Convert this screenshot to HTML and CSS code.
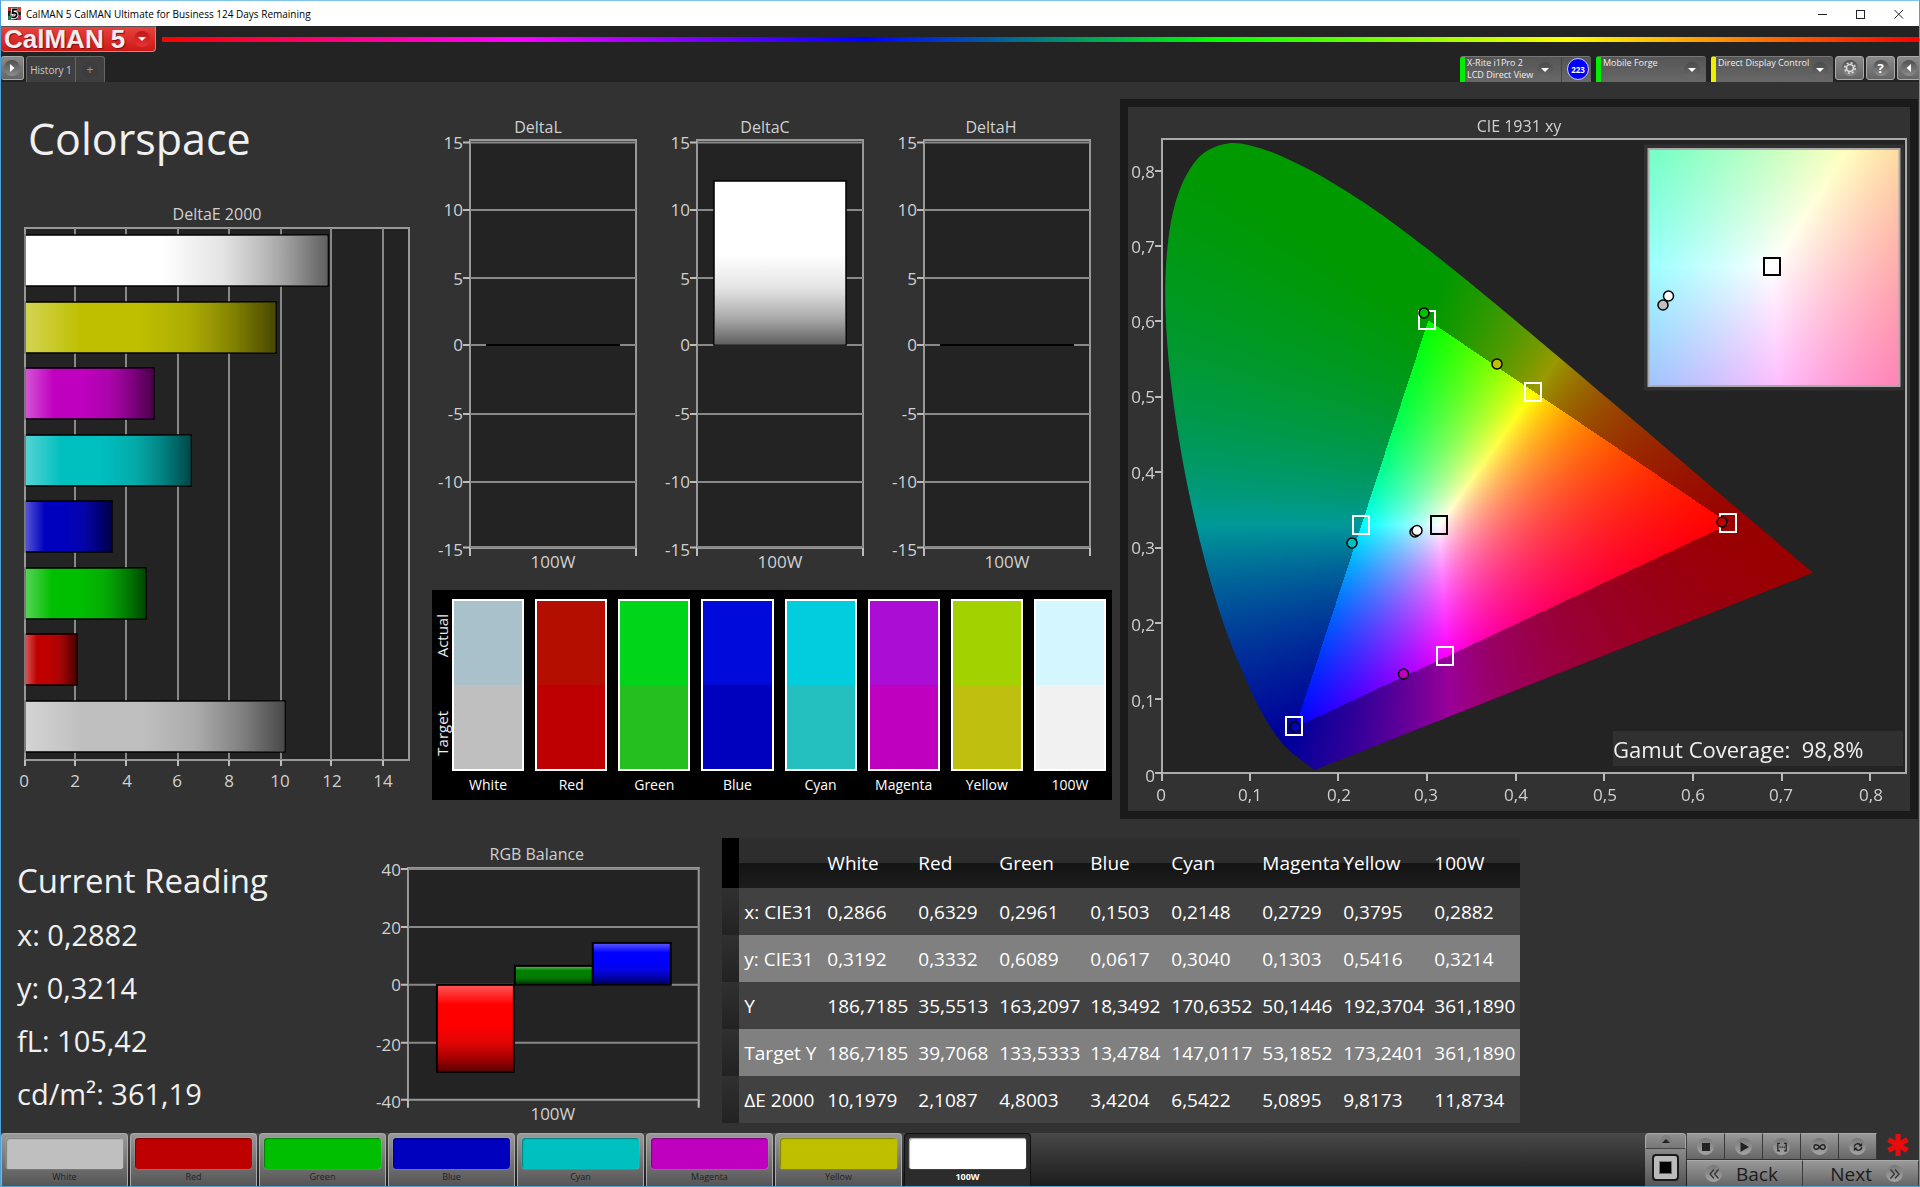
FILE: index.html
```html
<!DOCTYPE html>
<html lang="en">
<head>
<meta charset="utf-8">
<title>CalMAN 5 CalMAN Ultimate for Business</title>
<link rel="stylesheet" href="styles.css">
</head>
<body>
<div class="window">
  <header class="titlebar">
    <svg class="app-icon" viewBox="0 0 13 13" aria-hidden="true">
      <rect width="13" height="13" fill="#222"/>
      <rect width="4" height="4" fill="#b33a2e"/><rect x="9" width="4" height="5" fill="#c43"/>
      <rect y="9" width="4" height="4" fill="#2c7a4a"/><rect x="9" y="8" width="4" height="5" fill="#a3365a"/>
      <path d="M9.5 2.5H5L4.500 6.200C8 5.200 9 6.500 8.500 8.500C8 10.500 5.500 10.800 3.500 10" fill="none" stroke="#fff" stroke-width="3.600"/>
      <path d="M9.500 2.500H5L4.500 6.200C8 5.200 9 6.500 8.500 8.500C8 10.500 5.500 10.800 3.500 10" fill="none" stroke="#000" stroke-width="1.800"/>
    </svg>
    <span class="titlebar-text">CalMAN 5 CalMAN Ultimate for Business 124 Days Remaining</span>
    <div class="window-controls">
      <button aria-label="Minimize"><svg viewBox="0 0 10 10"><path d="M0 5.500H9" stroke="#222"/></svg></button>
      <button aria-label="Maximize"><svg viewBox="0 0 10 10"><rect x=".5" y="1.500" width="8" height="8" fill="none" stroke="#222"/></svg></button>
      <button aria-label="Close"><svg viewBox="0 0 10 10"><path d="M.5 1L9 9.500M9 1L.5 9.500" stroke="#222"/></svg></button>
    </div>
  </header>

  <div class="brandbar">
    <button class="brand"><span class="brand-name">CalMAN</span><span class="brand-five">5</span><span class="knob knob-red"><svg viewBox="0 0 8 4"><path d="M0 0H8L4 4Z" fill="#fff"/></svg></span></button>
    <div class="rainbow"></div>
  </div>

  <nav class="tabbar">
    <button class="square-btn square-left" aria-label="Expand"><span class="knob"><svg viewBox="0 0 8 10"><path d="M1.500 0L7 5L1.500 10Z" fill="#fff"/></svg></span></button>
    <div class="tabs">
      <button class="tab">History 1</button>
      <button class="tab tab-add" aria-label="Add tab"><span class="knob knob-dark">+</span></button>
    </div>
    <div class="devices">
      <div class="device device-meter">
        <button class="device-btn go"><span class="device-text">X-Rite i1Pro 2<br>LCD Direct View</span><span class="knob knob-shade"><svg viewBox="0 0 8 4"><path d="M0 0H8L4 4Z" fill="#fff"/></svg></span></button>
        <button class="meter-count">223</button>
      </div>
      <button class="device device-btn device-source go"><span class="device-text">Mobile Forge</span><span class="knob knob-shade"><svg viewBox="0 0 8 4"><path d="M0 0H8L4 4Z" fill="#fff"/></svg></span></button>
      <button class="device device-btn device-display warn"><span class="device-text">Direct Display Control</span><span class="knob knob-shade"><svg viewBox="0 0 8 4"><path d="M0 0H8L4 4Z" fill="#fff"/></svg></span></button>
    </div>
    <div class="tools">
      <button class="square-btn" aria-label="Settings"><span class="knob"><svg class="gear" viewBox="0 0 12 12"><circle cx="6" cy="6" r="3.500" fill="none" stroke="#ddd" stroke-width="1.600"/><circle cx="6" cy="6" r="5.200" fill="none" stroke="#ddd" stroke-width="1.600" stroke-dasharray="2 2.080"/></svg></span></button>
      <button class="square-btn" aria-label="Help"><span class="knob knob-help">?</span></button>
      <button class="square-btn square-right" aria-label="Collapse"><span class="knob"><svg viewBox="0 0 8 10"><path d="M6.500 0L1 5L6.500 10Z" fill="#fff"/></svg></span></button>
    </div>
  </nav>

  <main>
    <div class="row-top">
      <section class="col-delta-e">
        <h1>Colorspace</h1>
        <svg class="chart" viewBox="1 200 430 600" role="img" aria-label="DeltaE 2000">
          <defs>
            <linearGradient id="shade-x">
              <stop offset="0" stop-color="#fff" stop-opacity=".33"/><stop offset=".22" stop-color="#fff" stop-opacity="0"/>
              <stop offset=".45" stop-color="#222" stop-opacity="0"/><stop offset=".65" stop-color="#222" stop-opacity=".12"/><stop offset=".85" stop-color="#000" stop-opacity=".35"/><stop offset="1" stop-color="#000" stop-opacity=".62"/>
            </linearGradient>
            <linearGradient id="shade-y" x2="0" y2="1">
              <stop offset="0" stop-color="#fff" stop-opacity=".33"/><stop offset=".22" stop-color="#fff" stop-opacity="0"/>
              <stop offset=".45" stop-color="#222" stop-opacity="0"/><stop offset=".65" stop-color="#222" stop-opacity=".12"/><stop offset=".85" stop-color="#000" stop-opacity=".35"/><stop offset="1" stop-color="#000" stop-opacity=".62"/>
            </linearGradient>
          </defs>
          <text class="label mid" x="217" y="220">DeltaE 2000</text>
          <rect class="plot" x="25" y="228" width="384" height="532"/>
          <path class="grid" d="M75 228V760M126 228V760M178 228V760M229 228V760M281 228V760M331 228V760M383 228V760"/>
          <path class="tick" d="M25 760V766M75 760V766M126 760V766M178 760V766M229 760V766M281 760V766M331 760V766M383 760V766"/>
          <g stroke="#000" stroke-width="1.500">
            <rect x="25" y="235" width="303" height="51" fill="#fff"/>
            <rect x="25" y="302" width="251" height="51" fill="#bfbf00"/>
            <rect x="25" y="368" width="129" height="51" fill="#bf00bf"/>
            <rect x="25" y="435" width="166" height="51" fill="#00bfbf"/>
            <rect x="25" y="501" width="87" height="51" fill="#0000bf"/>
            <rect x="25" y="568" width="121" height="51" fill="#00bf00"/>
            <rect x="25" y="634" width="52" height="51" fill="#bf0000"/>
            <rect x="25" y="701" width="260" height="51" fill="#bfbfbf"/>
          </g>
          <g fill="url(#shade-x)">
            <rect x="26" y="236" width="301" height="49"/><rect x="26" y="303" width="249" height="49"/><rect x="26" y="369" width="127" height="49"/><rect x="26" y="436" width="164" height="49"/><rect x="26" y="502" width="85" height="49"/><rect x="26" y="569" width="119" height="49"/><rect x="26" y="635" width="50" height="49"/><rect x="26" y="702" width="258" height="49"/>
          </g>
          <path d="M25 228V760" stroke="#999" stroke-width="1.500"/>
          <g class="tick-label mid">
            <text x="24" y="787">0</text><text x="75" y="787">2</text><text x="127" y="787">4</text><text x="177" y="787">6</text><text x="229" y="787">8</text><text x="280" y="787">10</text><text x="332" y="787">12</text><text x="383" y="787">14</text>
          </g>
        </svg>
      </section>

      <section class="col-delta-lch">
        <svg class="chart" viewBox="431 110 688 470" role="img" aria-label="DeltaL, DeltaC and DeltaH">
          <defs>
            <g id="delta-axis">
              <rect class="plot" x="470" y="140" width="166" height="408"/>
              <path class="grid" d="M470 142.500H636M470 210H636M470 278H636M470 345H636M470 414H636M470 482H636"/>
              <path class="grid" d="M470 547H636"/>
              <path class="tick" d="M463 142.500H470M463 210H470M463 278H470M463 345H470M463 414H470M463 482H470M463 547.500H470M470 548V556M636 548V556"/>
              <g class="tick-label end">
                <text x="463" y="149">15</text><text x="463" y="216">10</text><text x="463" y="285">5</text><text x="463" y="351">0</text><text x="463" y="420">-5</text><text x="463" y="488">-10</text><text x="463" y="556">-15</text>
              </g>
              <text class="tick-label mid" x="553" y="568">100W</text>
            </g>
          </defs>
          <use href="#delta-axis"/><use href="#delta-axis" x="227"/><use href="#delta-axis" x="454"/>
          <g class="label mid"><text x="538" y="133">DeltaL</text><text x="765" y="133">DeltaC</text><text x="991" y="133">DeltaH</text></g>
          <path d="M486 345H620M940 345H1074" stroke="#000" stroke-width="2"/>
          <rect x="714" y="181" width="132" height="164" fill="#fff" stroke="#000" stroke-width="1.500"/>
          <rect x="715" y="182" width="130" height="162" fill="url(#shade-y)"/>
        </svg>
        <div class="swatches">
          <div class="swatch-sides"><span>Actual</span><span>Target</span></div>
          <figure><div class="swatch white"></div><figcaption>White</figcaption></figure>
          <figure><div class="swatch red"></div><figcaption>Red</figcaption></figure>
          <figure><div class="swatch green"></div><figcaption>Green</figcaption></figure>
          <figure><div class="swatch blue"></div><figcaption>Blue</figcaption></figure>
          <figure><div class="swatch cyan"></div><figcaption>Cyan</figcaption></figure>
          <figure><div class="swatch magenta"></div><figcaption>Magenta</figcaption></figure>
          <figure><div class="swatch yellow"></div><figcaption>Yellow</figcaption></figure>
          <figure><div class="swatch w100"></div><figcaption>100W</figcaption></figure>
        </div>
      </section>

      <section class="col-cie">
        <div class="cie">
          <canvas id="cie" width="782" height="704"></canvas>
          <svg class="chart" viewBox="1128 106 782 704" role="img" aria-label="CIE 1931 xy">
            <text class="label mid" x="1519" y="131">CIE 1931 xy</text>
            <rect class="frame" x="1162" y="138" width="744" height="634"/>
            <path class="tick" d="M1155 170H1162M1155 245H1162M1155 320H1162M1155 396H1162M1155 471H1162M1155 547H1162M1155 622H1162M1155 698H1162M1155 772H1162M1162 772V780M1250 772V780M1338 772V780M1427 772V780M1516 772V780M1604 772V780M1693 772V780M1782 772V780M1870 772V780"/>
            <g class="tick-label end">
              <text x="1155" y="177">0,8</text><text x="1155" y="252">0,7</text><text x="1155" y="327">0,6</text><text x="1155" y="402">0,5</text><text x="1155" y="478">0,4</text><text x="1155" y="553">0,3</text><text x="1155" y="630">0,2</text><text x="1155" y="706">0,1</text><text x="1155" y="781">0</text>
            </g>
            <g class="tick-label mid">
              <text x="1161" y="800">0</text><text x="1250" y="800">0,1</text><text x="1339" y="800">0,2</text><text x="1426" y="800">0,3</text><text x="1516" y="800">0,4</text><text x="1605" y="800">0,5</text><text x="1693" y="800">0,6</text><text x="1781" y="800">0,7</text><text x="1871" y="800">0,8</text>
            </g>
            <rect x="1646" y="145.500" width="256" height="242" fill="none" stroke="#303030" stroke-width="4"/>
            <rect class="frame" x="1648.500" y="148" width="251" height="237"/>
            <g fill="none" stroke="#fff" stroke-width="2">
              <rect x="1419" y="310" width="16" height="18"/><rect x="1525" y="382" width="16" height="18"/><rect x="1353" y="515" width="16" height="18"/><rect x="1720" y="513" width="16" height="18"/><rect x="1437" y="646" width="16" height="18"/><rect x="1286" y="716" width="16" height="18"/>
            </g>
            <g fill="none" stroke="#000" stroke-width="2"><rect x="1431" y="515" width="16" height="18"/><rect x="1764" y="257" width="16" height="17"/></g>
            <g stroke="#000" stroke-width="1.500">
              <circle cx="1424" cy="312" r="5" fill="#00bf00"/><circle cx="1497" cy="363" r="5" fill="#bfbf00"/><circle cx="1352" cy="542" r="5" fill="#00bfbf"/><circle cx="1722" cy="521" r="5" fill="#bf0000"/><circle cx="1403.500" cy="673" r="5" fill="#bf00bf"/><circle cx="1295" cy="726" r="5" fill="#0000bf"/>
              <circle cx="1415" cy="531" r="5" fill="#bfbfbf"/><circle cx="1417" cy="529.500" r="5" fill="#fff"/>
              <circle cx="1663" cy="304" r="5" fill="#bfbfbf"/><circle cx="1668.500" cy="295" r="5" fill="#fff"/>
            </g>
            <rect x="1613" y="730" width="290" height="35" fill="#303030"/>
            <text class="coverage" x="1613" y="757">Gamut Coverage:&#160; 98,8%</text>
          </svg>
        </div>
      </section>
    </div>

    <div class="row-bottom">
      <section class="reading">
        <h2>Current Reading</h2>
        <p>x: 0,2882</p>
        <p>y: 0,3214</p>
        <p>fL: 105,42</p>
        <p>cd/m²: 361,19</p>
      </section>

      <svg class="chart" viewBox="361 840 340 290" role="img" aria-label="RGB Balance">
        <text class="label mid" x="537" y="860">RGB Balance</text>
        <rect class="plot" x="408" y="868" width="291" height="232"/>
        <path class="grid" d="M408 869H699M408 927H699M408 985H699M408 1043H699"/>
        <path class="tick" d="M401 869H408M401 927H408M401 985H408M401 1043H408M401 1100H408M408 1100V1108M699 1100V1108"/>
        <g class="tick-label end"><text x="401" y="876">40</text><text x="401" y="934">20</text><text x="401" y="991">0</text><text x="401" y="1051">-20</text><text x="401" y="1108">-40</text></g>
        <text class="tick-label mid" x="553" y="1120">100W</text>
        <g stroke="#000" stroke-width="2"><rect x="437" y="985" width="77" height="87" fill="#f00"/><rect x="515" y="966" width="78" height="19" fill="#008000"/><rect x="593" y="943" width="78" height="42" fill="#00f"/></g>
        <g fill="url(#shade-y)"><rect x="438" y="986" width="75" height="85"/><rect x="516" y="967" width="76" height="17"/><rect x="594" y="944" width="76" height="40"/></g>
      </svg>

      <table class="data">
        <colgroup><col class="w17"><col class="w83"><col class="w91"><col class="w80"><col class="w91"><col class="w80"><col class="w91"><col class="w80"><col class="w91"><col class="w91"></colgroup>
        <thead><tr><td class="grip"></td><td></td><th>White</th><th>Red</th><th>Green</th><th>Blue</th><th>Cyan</th><th>Magenta</th><th>Yellow</th><th>100W</th></tr></thead>
        <tbody>
          <tr><td class="grip"></td><th>x: CIE31</th><td>0,2866</td><td>0,6329</td><td>0,2961</td><td>0,1503</td><td>0,2148</td><td>0,2729</td><td>0,3795</td><td>0,2882</td></tr>
          <tr><td class="grip"></td><th>y: CIE31</th><td>0,3192</td><td>0,3332</td><td>0,6089</td><td>0,0617</td><td>0,3040</td><td>0,1303</td><td>0,5416</td><td>0,3214</td></tr>
          <tr><td class="grip"></td><th>Y</th><td>186,7185</td><td>35,5513</td><td>163,2097</td><td>18,3492</td><td>170,6352</td><td>50,1446</td><td>192,3704</td><td>361,1890</td></tr>
          <tr><td class="grip"></td><th>Target Y</th><td>186,7185</td><td>39,7068</td><td>133,5333</td><td>13,4784</td><td>147,0117</td><td>53,1852</td><td>173,2401</td><td>361,1890</td></tr>
          <tr><td class="grip"></td><th>ΔE 2000</th><td>10,1979</td><td>2,1087</td><td>4,8003</td><td>3,4204</td><td>6,5422</td><td>5,0895</td><td>9,8173</td><td>11,8734</td></tr>
        </tbody>
      </table>
    </div>
  </main>

  <footer class="footer">
    <div class="patches">
      <button class="patch"><span class="chip white"></span>White</button>
      <button class="patch"><span class="chip red"></span>Red</button>
      <button class="patch"><span class="chip green"></span>Green</button>
      <button class="patch"><span class="chip blue"></span>Blue</button>
      <button class="patch"><span class="chip cyan"></span>Cyan</button>
      <button class="patch"><span class="chip magenta"></span>Magenta</button>
      <button class="patch"><span class="chip yellow"></span>Yellow</button>
      <button class="patch selected"><span class="chip w100"></span>100W</button>
    </div>
    <div class="pattern">
      <button class="pattern-up" aria-label="More"><span class="knob knob-small"><svg viewBox="0 0 8 4"><path d="M0 4H8L4 0Z" fill="#222"/></svg></span></button>
      <button class="pattern-window" aria-label="Pattern window"><span class="pattern-frame"></span></button>
    </div>
    <div class="transport">
      <div class="transport-row">
        <button aria-label="Stop"><span class="knob knob-light"><svg viewBox="0 0 10 10"><rect x="1" y="1" width="8" height="8" fill="#222"/></svg></span></button>
        <button aria-label="Play"><span class="knob knob-light"><svg viewBox="0 0 10 10"><path d="M1.500 0L10 5L1.500 10Z" fill="#222"/></svg></span></button>
        <button aria-label="Read series"><span class="knob knob-light"><svg viewBox="0 0 12 10"><path d="M3.500 .5H1V9.500H3.500M8.500 .5H11V9.500H8.500" fill="none" stroke="#222" stroke-width="1.500"/><path d="M3 5H9.500" stroke="#222" stroke-width="1.500" stroke-dasharray="1.500 1"/></svg></span></button>
        <button aria-label="Read continuously"><span class="knob knob-light"><svg class="wide" viewBox="0 0 14 8"><path d="M7 4C5 1 1 .5 1 4S5 7 7 4S13 .5 13 4S9 7 7 4Z" fill="none" stroke="#222" stroke-width="1.600"/></svg></span></button>
        <button aria-label="Refresh"><span class="knob knob-light"><svg viewBox="0 0 12 12"><path d="M1.500 5.500C2 2 6.500 1 9 3.500M10.500 6.500C10 10 5.500 11 3 8.500" fill="none" stroke="#222" stroke-width="1.800"/><path d="M11 1V5.500H6.500ZM1 11V6.500H5.500Z" fill="#222"/></svg></span></button>
        <svg class="star" viewBox="0 0 24 24" role="img" aria-label="Unsaved"><path d="M12 1V23M2.500 6.500L21.500 17.500M21.500 6.500L2.500 17.500" stroke="#e80c0c" stroke-width="5"/></svg>
      </div>
      <div class="transport-nav">
        <button><span class="knob knob-light"><svg viewBox="0 0 10 10"><path d="M5 .5L1 5L5 9.500M9.500 .5L5.500 5L9.500 9.500" fill="none" stroke="#333" stroke-width="1.300"/></svg></span>Back</button>
        <button>Next<span class="knob knob-light"><svg viewBox="0 0 10 10"><path d="M.5 .5L4.500 5L.5 9.500M5 .5L9 5L5 9.500" fill="none" stroke="#333" stroke-width="1.300"/></svg></span></button>
      </div>
    </div>
  </footer>
</div>
<script src="cie.js"></script>
</body>
</html>
```
FILE: styles.css
```css
* { box-sizing: border-box; }
body { margin: 0; font-family: "Open Sans", "Noto Sans", sans-serif; background: #323232; color: #f0f0f0; }
button { margin: 0; padding: 0; border: 0; background: none; color: inherit; font: inherit; }
svg { display: block; }
h1, h2, p, figure { margin: 0; font-weight: 400; }

.window { display: flex; flex-direction: column; min-height: 100vh; border: 1px solid #4aa3d8; border-top-color: #7fc4ec; background: #323232; }

.titlebar { display: flex; align-items: center; height: 25px; padding-left: 7px; gap: 5px; background: #fff; color: #000; }
.app-icon { width: 13px; height: 13px; }
.titlebar-text { flex: 1; font-size: 10px; line-height: 24px; }
.window-controls { display: flex; padding-right: 15px; gap: 28px; }
.window-controls svg { width: 10px; height: 10px; }

.brandbar { display: flex; align-items: center; gap: 6px; height: 30px; background: #232323; }
.brand { display: flex; align-items: center; align-self: flex-start; gap: 3px; width: 155px; height: 26px; padding-left: 3px; background: linear-gradient(#e8433f, #cf1715); border: 1px solid #999; border-top-color: #555; border-left: 0; border-radius: 0 0 4px 4px; font-family: "Liberation Sans", sans-serif; font-weight: 700; font-size: 26px; line-height: 20px; color: #eee; text-shadow: 1px 1px 1px #7a1010; }
.brand-name { width: 102px; text-align: left; }
.brand-five { width: 18px; }
.knob { display: flex; align-items: center; justify-content: center; flex: none; width: 16px; height: 16px; border-radius: 50%; background: linear-gradient(#505050, #8c8c8c); }
.knob svg { width: 8px; height: 8px; }
.knob-red { background: linear-gradient(#c01616, #e63532); margin-left: 4px; }
.knob-dark { background: #3c3c3c; color: #999; font-size: 12px; line-height: 14px; }
.knob-shade { background: linear-gradient(#4a4a4a, #6a6a6a); }
.knob-help { color: #fff; font-weight: 700; font-size: 13px; line-height: 14px; }
.knob .gear { width: 12px; height: 12px; }
.knob .wide { width: 13px; }
.rainbow { flex: 1; height: 5px; margin-bottom: 4px; background: linear-gradient(90deg, #f00, #f0f 20%, #00f 40%, #0f0 60%, #ff0 80%, #f00); }

.tabbar { display: flex; align-items: flex-start; height: 26px; background: #232323; }
.square-btn { display: flex; align-items: center; justify-content: center; width: 29px; height: 24px; background: linear-gradient(#8a8a8a, #666); border: 1px solid #aaa; border-radius: 3px; }
.square-left { width: 23px; border-left: 0; }
.square-right { width: 22px; border-right: 0; border-radius: 3px 0 0 3px; }
.tabs { display: flex; margin-left: 2px; height: 26px; background: #3f3f3f; border: 1px solid #666; border-bottom: 0; border-radius: 3px 3px 0 0; }
.tab { width: 49px; font-size: 10px; line-height: 24px; color: #ccc; border-right: 1px solid #666; white-space: nowrap; }
.tab-add { display: flex; align-items: center; justify-content: center; width: 28px; border: 0; }
.devices { display: flex; gap: 5px; margin-left: auto; height: 26px; }
.device { border-top: 1px solid #777; border-radius: 3px 3px 0 0; background: linear-gradient(#555, #686868); overflow: hidden; }
.device-meter { display: flex; width: 131px; }
.device-btn { display: flex; align-items: center; gap: 3px; border-left: 5px solid; padding: 0 6px 0 2px; }
.device-meter .device-btn { width: 102px; padding-right: 8px; border-right: 1px solid #444; background: none; }
.device-source { width: 110px; }
.device-display { width: 122px; }
.go { border-left-color: #0e0; }
.warn { border-left-color: #ee0; }
.device-text { flex: 1; align-self: flex-start; text-align: left; font-size: 9px; line-height: 12px; color: #eee; white-space: nowrap; }
.meter-count { width: 22px; height: 22px; margin: 1px 0 0 5px; border: 1px solid #ccf; border-radius: 50%; background: #00f; color: #fff; font-size: 8px; font-weight: 700; }
.tools { display: flex; gap: 2px; margin-left: 2px; }

main { flex: 1; }
.row-top { display: grid; grid-template-columns: 430fr 688fr 800fr; align-items: start; }
.chart { width: 100%; height: auto; }
h1 { height: 118px; padding: 26px 0 0 27px; font-size: 43px; line-height: 62px; }
.label { font-size: 16px; fill: #d0d0d0; }
.tick-label { font-size: 17px; fill: #d0d0d0; }
.mid { text-anchor: middle; }
.end { text-anchor: end; }
.coverage { font-size: 22px; fill: #f0f0f0; }
.plot { fill: #232323; stroke: #999; stroke-width: 2; }
.frame { fill: none; stroke: #aaa; stroke-width: 2; }
.grid { fill: none; stroke: #888; stroke-width: 2; }
.tick { fill: none; stroke: #bbb; stroke-width: 2; }

.col-delta-lch { padding-top: 28px; }
.swatches { display: flex; gap: 11px; margin: 10px 7px 0 1px; padding: 9px 6px 0 0; height: 210px; background: #000; }
.swatch-sides { display: flex; flex-direction: column; justify-content: space-between; align-items: center; width: 20px; height: 172px; margin-right: -11px; padding: 15px 0; font-size: 15px; line-height: 20px; }
.swatch-sides span { writing-mode: vertical-rl; transform: rotate(180deg); }
.swatches figure { flex: 1; }
.swatch { height: 172px; border: 2px solid #fff; background: linear-gradient(var(--actual) 50%, var(--target) 50%); }
figcaption { text-align: center; font-size: 14px; line-height: 28px; color: #fff; }
.white { --actual: #a8c1ca; --target: #bfbfbf; --chip: #bfbfbf; }
.red { --actual: #b40e00; --target: #bf0000; --chip: #bf0000; }
.green { --actual: #00d51a; --target: #25c020; --chip: #00bf00; }
.blue { --actual: #000bdb; --target: #0000bf; --chip: #0000bf; }
.cyan { --actual: #00cddd; --target: #24c0c0; --chip: #00bfbf; }
.magenta { --actual: #ac0dd5; --target: #bf00bf; --chip: #bf00bf; }
.yellow { --actual: #a2d300; --target: #bfbf10; --chip: #bfbf00; }
.w100 { --actual: #d4f7ff; --target: #f1f1f1; --chip: #fff; }

.col-cie { padding: 17px 1px 0; }
.cie { display: grid; border: 8px solid #1a1a1a; }
.cie > * { grid-area: 1 / 1; width: 100%; height: auto; }

.row-bottom { display: grid; grid-template-columns: 360fr 340fr 22fr 797fr 399fr; align-items: start; padding-top: 19px; }
.reading { padding: 16px 0 0 16px; }
h2 { font-size: 33px; line-height: 54px; }
.reading p { font-size: 29px; line-height: 53px; }
.row-bottom > .chart { margin-top: 2px; }
.data { grid-column: 4; width: 100%; table-layout: fixed; border-collapse: collapse; font-size: 19px; line-height: 26px; color: #fff; }
.w17 { width: 17px; }
.w80 { width: 81px; }
.w83 { width: 83px; }
.w91 { width: 91px; }
.data th, .data td { height: 47px; padding: 0 0 0 5px; text-align: left; font-weight: 400; white-space: nowrap; }
.data thead th, .data thead td { height: 50px; }
.data thead tr { background: linear-gradient(#2d2d2d 50%, #141414 50%, #1c1c1c); }
.data tbody tr { background: #414141; }
.data tbody tr:nth-child(even) { background: #808080; }
.data thead .grip { background: #000; }
.data tbody .grip { background: linear-gradient(#303030, #222); }

.footer { display: flex; height: 53px; background: linear-gradient(#484848, #1c1c1c); }
.patches { display: flex; gap: 2px; flex: 1; }
.patch { display: flex; flex-direction: column; width: 127px; padding: 4px 4px 0; border: 1px solid #aaa; border-width: 1px 1px 0; border-radius: 4px 4px 0 0; background: linear-gradient(#999, #555); color: #222; font-size: 9px; line-height: 16px; align-items: center; }
.chip { width: 100%; height: 31px; border-radius: 3px; background: var(--chip); box-shadow: inset 1px 1px 1px #0005, 0 0 1px #eee; }
.patch.selected { border-color: #111; background: #2c2c2c; color: #fff; font-weight: 700; }
.pattern { display: flex; flex-direction: column; width: 41px; margin-right: 1px; }
.pattern-up { display: flex; align-items: center; justify-content: center; height: 16px; background: linear-gradient(#909090, #777); border: 1px solid #aaa; border-bottom-color: #444; border-radius: 4px 4px 0 0; }
.knob-small { width: 12px; height: 12px; background: #808080; }
.pattern-window { display: flex; align-items: center; justify-content: center; flex: 1; background: linear-gradient(#8a8a8a, #555); }
.pattern-frame { width: 27px; height: 27px; border: 2px solid #1a1a1a; border-radius: 4px; background: #000 content-box; padding: 6px; box-shadow: inset 0 0 0 5px #bbb; }
.transport { width: 232px; background: #323232; }
.transport-row { display: flex; height: 27px; }
.transport-row button, .transport-nav button { display: flex; align-items: center; justify-content: center; background: linear-gradient(#999, #666); border-top: 1px solid #aaa; border-right: 1px solid #3a3a3a; }
.transport-row button { width: 38px; height: 26px; }
.knob-light { width: 17px; height: 17px; background: linear-gradient(#777, #a5a5a5); }
.knob-light svg { width: 10px; height: 10px; }
.star { width: 24px; height: 24px; margin-left: 9px; }
.transport-nav { display: grid; grid-template-columns: 1fr 1fr; height: 26px; }
.transport-nav button { gap: 14px; color: #1c1c1c; font-size: 19px; font-weight: 500; line-height: 22px; }
.transport-nav button:first-child { justify-content: flex-start; padding-left: 18px; }
.transport-nav button:last-child { justify-content: flex-end; padding-right: 15px; }
```
FILE: cie.js
```js
// Paints the chromaticity diagram and the magnified white point view.
// Coordinates share the chart's viewBox, whose origin is (1128, 106).
const OX = 1128, OY = 106, W = 782, H = 704;
const LOCUS = [[.1741,.005],[.1733,.0048],[.1714,.0051],[.1689,.0069],[.1644,.0109],[.1566,.0177],[.151,.0227],[.144,.0297],[.1355,.0399],[.1241,.0578],[.1096,.0868],[.0913,.1327],[.0687,.2007],[.0454,.295],[.0235,.4127],[.0082,.5384],[.0039,.6548],[.0139,.7502],[.0389,.812],[.0743,.8338],[.1142,.8262],[.1547,.8059],[.1929,.7816],[.2296,.7543],[.2658,.7243],[.3016,.6923],[.3373,.6589],[.3731,.6245],[.4441,.5547],[.5125,.4866],[.5752,.4242],[.627,.3725],[.6658,.334],[.6915,.3083],[.719,.2809],[.7347,.2653]];
const px = x => 1162 + 886 * x - OX;
const py = y => 772 - 755 * y - OY;

function rgb(x, y) {
  y = Math.max(y, 0.0001);
  const X = x / y, Z = (1 - x - y) / y;
  const c = [3.2406 * X - 1.5372 - 0.4986 * Z, -0.9689 * X + 1.8758 + 0.0415 * Z, 0.0557 * X - 0.204 + 1.057 * Z];
  const outside = Math.min(...c) < 0;
  const max = Math.max(...c);
  const level = outside ? 153 : 255;
  return c.map(v => Math.max(v, 0) / max * level);
}

function raster(toX, toY) {
  const off = document.createElement('canvas');
  off.width = W; off.height = H;
  const g = off.getContext('2d');
  const img = g.createImageData(W, H);
  for (let j = 0, k = 0; j < H; j++) {
    for (let i = 0; i < W; i++, k += 4) {
      const c = rgb(toX(i), toY(j));
      img.data[k] = c[0]; img.data[k + 1] = c[1]; img.data[k + 2] = c[2]; img.data[k + 3] = 255;
    }
  }
  g.putImageData(img, 0, 0);
  return off;
}

const ctx = document.getElementById('cie').getContext('2d');
ctx.fillStyle = '#323232';
ctx.fillRect(0, 0, W, H);
ctx.fillStyle = '#232323';
ctx.fillRect(1162 - OX, 138 - OY, 744, 634);

// Smooth curve through every locus point (Catmull-Rom as Béziers).
const pts = LOCUS.map(([x, y]) => [px(x), py(y)]);
ctx.save();
ctx.beginPath();
ctx.moveTo(...pts[0]);
for (let i = 0; i < pts.length - 1; i++) {
  const a = pts[Math.max(i - 1, 0)], b = pts[i], c = pts[i + 1], d = pts[Math.min(i + 2, pts.length - 1)];
  ctx.bezierCurveTo(b[0] + (c[0] - a[0]) / 6, b[1] + (c[1] - a[1]) / 6, c[0] - (d[0] - b[0]) / 6, c[1] - (d[1] - b[1]) / 6, c[0], c[1]);
}
ctx.closePath();
ctx.clip();
ctx.drawImage(raster(i => (i + OX - 1162) / 886, j => (771 - j - OY) / 753.5), 0, 0);
ctx.restore();

const inset = raster(i => .3127 + (i + OX - 1772) / 4190, j => .329 - (j + OY - 265) / 3950);
const ix = 1649 - OX, iy = 148 - OY;
ctx.drawImage(inset, ix, iy, 251, 237, ix, iy, 251, 237);
```
